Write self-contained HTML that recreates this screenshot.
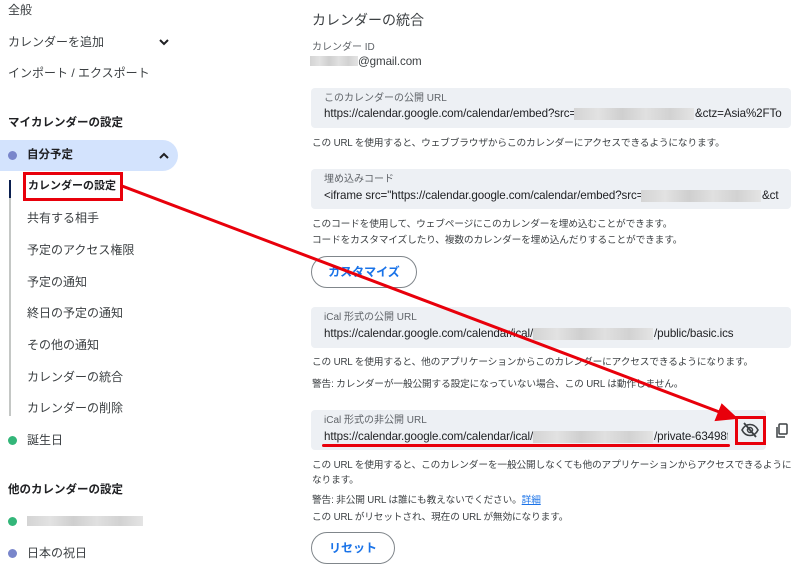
<!DOCTYPE html>
<html><head><meta charset="utf-8"><style>
*{margin:0;padding:0;box-sizing:border-box}
body{width:800px;height:576px;background:#fff;position:relative;overflow:hidden;font-family:"Liberation Sans","Noto Sans CJK JP",sans-serif;color:#3c4043}
.t{position:absolute;white-space:nowrap;line-height:1}
.s{font-size:12px;color:#3c4043}
.b{font-weight:bold;color:#202124;font-size:11.5px}
.box{position:absolute;left:311px;background:#edf0f4;border-radius:4px}
.lab{font-size:10px;color:#5f6368}
.url{font-size:11.6px;color:#202124;letter-spacing:-0.1px}
.d{font-size:9.7px;color:#3c4043;letter-spacing:-0.15px}
.blur{position:absolute;background:linear-gradient(90deg,#d4d4d4,#e2e2e2 20%,#cfcfcf 40%,#e0e0e0 60%,#d2d2d2 80%,#e4e4e4)}
.dot{position:absolute;width:9px;height:9px;border-radius:50%}
.btn{position:absolute;border:1px solid #80868b;border-radius:17px;color:#1a73e8;font-size:12px;font-weight:bold;text-align:center}
</style></head><body>
<div class="t s" style="left:8px;top:4px">全般</div>
<div class="t s" style="left:8px;top:36px">カレンダーを追加</div>
<svg style="position:absolute;left:158px;top:37px" width="12" height="10"><path d="M2 3l4 4 4-4" stroke="#202124" stroke-width="2" fill="none"/></svg>
<div class="t s" style="left:8px;top:67px">インポート / エクスポート</div>
<div class="t s b" style="left:8px;top:118px">マイカレンダーの設定</div>
<div style="position:absolute;left:0;top:140px;width:178px;height:31px;background:#d3e3fd;border-radius:0 16px 16px 0"></div>
<div class="dot" style="left:8px;top:151px;background:#7986cb"></div>
<div class="t s b" style="left:27px;top:150px">自分予定</div>
<svg style="position:absolute;left:158px;top:151px" width="12" height="10"><path d="M2 7l4-4 4 4" stroke="#202124" stroke-width="2" fill="none"/></svg>
<div style="position:absolute;left:9px;top:180px;width:2px;height:236px;background:#c4c7c5"></div>
<div style="position:absolute;left:9px;top:180px;width:2px;height:18px;background:#0b1f4f"></div>
<div class="t s b" style="left:28px;top:181px;font-size:11px">カレンダーの設定</div>
<div style="position:absolute;left:23px;top:172px;width:100px;height:29px;border:3px solid #e8000b"></div>
<div class="t s" style="left:27px;top:212px">共有する相手</div>
<div class="t s" style="left:27px;top:244px">予定のアクセス権限</div>
<div class="t s" style="left:27px;top:276px">予定の通知</div>
<div class="t s" style="left:27px;top:307px">終日の予定の通知</div>
<div class="t s" style="left:27px;top:339px">その他の通知</div>
<div class="t s" style="left:27px;top:371px">カレンダーの統合</div>
<div class="t s" style="left:27px;top:402px">カレンダーの削除</div>
<div class="dot" style="left:8px;top:436px;background:#33b679"></div>
<div class="t s" style="left:27px;top:434px">誕生日</div>
<div class="t s b" style="left:8px;top:485px">他のカレンダーの設定</div>
<div class="dot" style="left:8px;top:517px;background:#33b679"></div>
<div class="blur" style="left:27px;top:516px;width:116px;height:10px"></div>
<div class="dot" style="left:8px;top:549px;background:#7986cb"></div>
<div class="t s" style="left:27px;top:547px">日本の祝日</div>

<div class="t" style="left:312px;top:13px;font-size:14px;color:#3c4043">カレンダーの統合</div>
<div class="t lab" style="left:312px;top:43px">カレンダー ID</div>
<div class="blur" style="left:310px;top:56px;width:48px;height:10px"></div>
<div class="t url" style="left:358px;top:56px;color:#3c4043">@gmail.com</div>

<div class="box" style="top:88px;width:480px;height:40px"></div>
<div class="t lab" style="left:324px;top:94px">このカレンダーの公開 URL</div>
<div class="t url" style="left:324px;top:108px">https://calendar.google.com/calendar/embed?src=</div>
<div class="blur" style="left:574px;top:108px;width:120px;height:12px"></div>
<div class="t url" style="left:695px;top:108px">&amp;ctz=Asia%2FTo</div>
<div class="t d" style="left:312px;top:139px">この URL を使用すると、ウェブブラウザからこのカレンダーにアクセスできるようになります。</div>

<div class="box" style="top:169px;width:480px;height:40px"></div>
<div class="t lab" style="left:324px;top:175px">埋め込みコード</div>
<div class="t url" style="left:324px;top:190px">&lt;iframe src="https://calendar.google.com/calendar/embed?src=</div>
<div class="blur" style="left:641px;top:190px;width:120px;height:12px"></div>
<div class="t url" style="left:762px;top:190px">&amp;ct</div>
<div class="t d" style="left:312px;top:220px">このコードを使用して、ウェブページにこのカレンダーを埋め込むことができます。</div>
<div class="t d" style="left:312px;top:236px">コードをカスタマイズしたり、複数のカレンダーを埋め込んだりすることができます。</div>
<div class="btn" style="left:311px;top:256px;width:106px;height:32px;line-height:30px">カスタマイズ</div>

<div class="box" style="top:307px;width:480px;height:41px"></div>
<div class="t lab" style="left:324px;top:313px">iCal 形式の公開 URL</div>
<div class="t url" style="left:324px;top:328px">https://calendar.google.com/calendar/ical/</div>
<div class="blur" style="left:533px;top:328px;width:120px;height:12px"></div>
<div class="t url" style="left:654px;top:328px">/public/basic.ics</div>
<div class="t d" style="left:312px;top:358px">この URL を使用すると、他のアプリケーションからこのカレンダーにアクセスできるようになります。</div>
<div class="t d" style="left:312px;top:380px">警告: カレンダーが一般公開する設定になっていない場合、この URL は動作しません。</div>

<div class="box" style="top:410px;width:455px;height:40px"></div>
<div class="t lab" style="left:324px;top:416px">iCal 形式の非公開 URL</div>
<div class="t url" style="left:324px;top:431px">https://calendar.google.com/calendar/ical/</div>
<div class="blur" style="left:533px;top:431px;width:120px;height:12px"></div>
<div class="t url" style="left:654px;top:431px;width:74px;overflow:hidden">/private-63498f</div>
<div style="position:absolute;left:322px;top:444px;width:408px;height:3px;background:#e8000b;border-radius:2px"></div>
<div style="position:absolute;left:735px;top:416px;width:31px;height:29px;border:3px solid #e8000b"></div>
<svg style="position:absolute;left:741px;top:422px" width="18" height="16" viewBox="0 0 18 16"><path d="M1 8c2-4 5-5.5 8-5.5s6 1.5 8 5.5c-2 4-5 5.5-8 5.5S3 12 1 8z" stroke="#3c4043" stroke-width="1.6" fill="none"/><circle cx="9" cy="8" r="2.5" stroke="#3c4043" stroke-width="1.5" fill="none"/><path d="M3 1l12 14" stroke="#3c4043" stroke-width="1.8"/></svg>
<svg style="position:absolute;left:775px;top:423px" width="14" height="16" viewBox="0 0 14 16"><rect x="4" y="1" width="8" height="10" stroke="#3c4043" stroke-width="1.5" fill="none" rx="1"/><path d="M2 4v10h8" stroke="#3c4043" stroke-width="1.5" fill="none"/></svg>
<div class="t d" style="left:312px;top:461px">この URL を使用すると、このカレンダーを一般公開しなくても他のアプリケーションからアクセスできるように</div>
<div class="t d" style="left:312px;top:476px">なります。</div>
<div class="t d" style="left:312px;top:496px">警告: 非公開 URL は誰にも教えないでください。<span style="color:#1a73e8;text-decoration:underline">詳細</span></div>
<div class="t d" style="left:312px;top:513px">この URL がリセットされ、現在の URL が無効になります。</div>
<div class="btn" style="left:311px;top:532px;width:84px;height:32px;line-height:30px">リセット</div>

<svg style="position:absolute;left:0;top:0" width="800" height="576"><line x1="122" y1="186" x2="722" y2="413" stroke="#e8000b" stroke-width="3"/><path d="M736 418L716 420L722 405Z" fill="#e8000b" stroke="#e8000b" stroke-width="2"/></svg>
</body></html>
